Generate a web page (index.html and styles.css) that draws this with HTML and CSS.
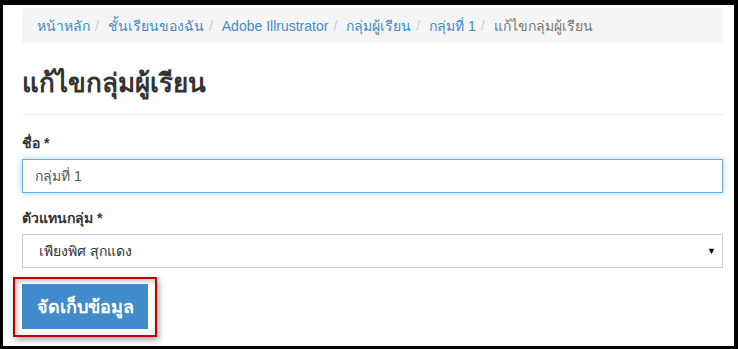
FILE: index.html
```html
<!DOCTYPE html>
<html lang="th">
<head>
    <meta charset="UTF-8">
    <meta name="viewport" content="width=device-width, initial-scale=1.0">
    <title>แก้ไขกลุ่มผู้เรียน</title>
    <link rel="stylesheet" href="styles.css">
</head>
<body>
<div id="frame">
    <ol class="breadcrumb">
        <li><a href="#">หน้าหลัก</a></li>
        <li><a href="#">ชั้นเรียนของฉัน</a></li>
        <li><a href="#">Adobe Illrustrator</a></li>
        <li><a href="#">กลุ่มผู้เรียน</a></li>
        <li><a href="#">กลุ่มที่ 1</a></li>
        <li class="active">แก้ไขกลุ่มผู้เรียน</li>
    </ol>

    <h1 class="page-header">แก้ไขกลุ่มผู้เรียน</h1>

    <form>
        <div class="form-group">
            <label for="name">ชื่อ *</label>
            <input type="text" id="name" class="form-control focused" value="กลุ่มที่ 1">
        </div>
        <div class="form-group">
            <label for="leader">ตัวแทนกลุ่ม *</label>
            <div class="select-box">
                <span>เพียงพิศ สุกแดง</span>
                <span class="caret">&#9660;</span>
            </div>
        </div>
        <!-- highlighted save button -->
        <div class="highlight">
            <button type="button" class="btn-save">จัดเก็บข้อมูล</button>
        </div>
    </form>
</div>
</body>
</html>
```

FILE: styles.css
```css
/* General Styles */
body {
    margin: 0;
    background-color: #000;
    font-family: Tahoma, "Liberation Sans", "Noto Sans", sans-serif;
    font-size: 14px;
    color: #333;
}

#frame {
    background-color: #fff;
    margin: 5px 4px 3px 3px;
    height: 341px;
    padding: 3px 11px 0 19px;
    box-sizing: border-box;
    overflow: hidden;
}

/* Breadcrumb */
.breadcrumb {
    list-style: none;
    margin: 0;
    padding: 8px 15px;
    height: 35px;
    box-sizing: border-box;
    background-color: #f5f5f5;
    border-radius: 2px;
    display: flex;
    align-items: center;
    white-space: nowrap;
}

.breadcrumb li + li::before {
    content: "/";
    color: #ccc;
    padding: 0 9px 0 5px;
}

.breadcrumb a {
    color: #428bca;
    text-decoration: none;
}

.breadcrumb .active {
    color: #777;
}

/* Heading */
.page-header {
    font-size: 26px;
    font-weight: bold;
    margin: 21px 0 0;
    padding-bottom: 12px;
    border-bottom: 1px solid #eee;
    line-height: 38px;
}

form {
    margin-top: 18px;
}

.form-group {
    margin-bottom: 15px;
}

label {
    display: block;
    font-weight: bold;
    margin-bottom: 6px;
    line-height: 20px;
}

.form-control {
    display: block;
    width: 100%;
    height: 34px;
    box-sizing: border-box;
    padding: 6px 12px;
    font-family: inherit;
    font-size: 14px;
    color: #555;
    border: 1px solid #ccc;
    background-color: #fff;
}

.focused {
    border-color: #66afe9;
    outline: none;
    box-shadow: 0 0 6px rgba(102, 175, 233, 0.6);
}

.select-box {
    height: 34px;
    box-sizing: border-box;
    border: 1px solid #ccc;
    padding: 0 6px 0 16px;
    display: flex;
    align-items: center;
    justify-content: space-between;
    color: #333;
}

.caret {
    font-size: 9px;
    color: #000;
}

/* Button */
.highlight {
    display: inline-block;
    margin: -6px 0 0 -9px;
    padding: 5px 7px 6px 7px;
    border: 2px solid #c00000;
    box-shadow: 2px 3px 6px rgba(0, 0, 0, 0.35), inset 2px 2px 5px rgba(0, 0, 0, 0.25);
}

.btn-save {
    display: block;
    width: 126px;
    height: 45px;
    border: none;
    background-color: #428bca;
    color: #fff;
    font-family: inherit;
    font-size: 18px;
    font-weight: bold;
}
```
